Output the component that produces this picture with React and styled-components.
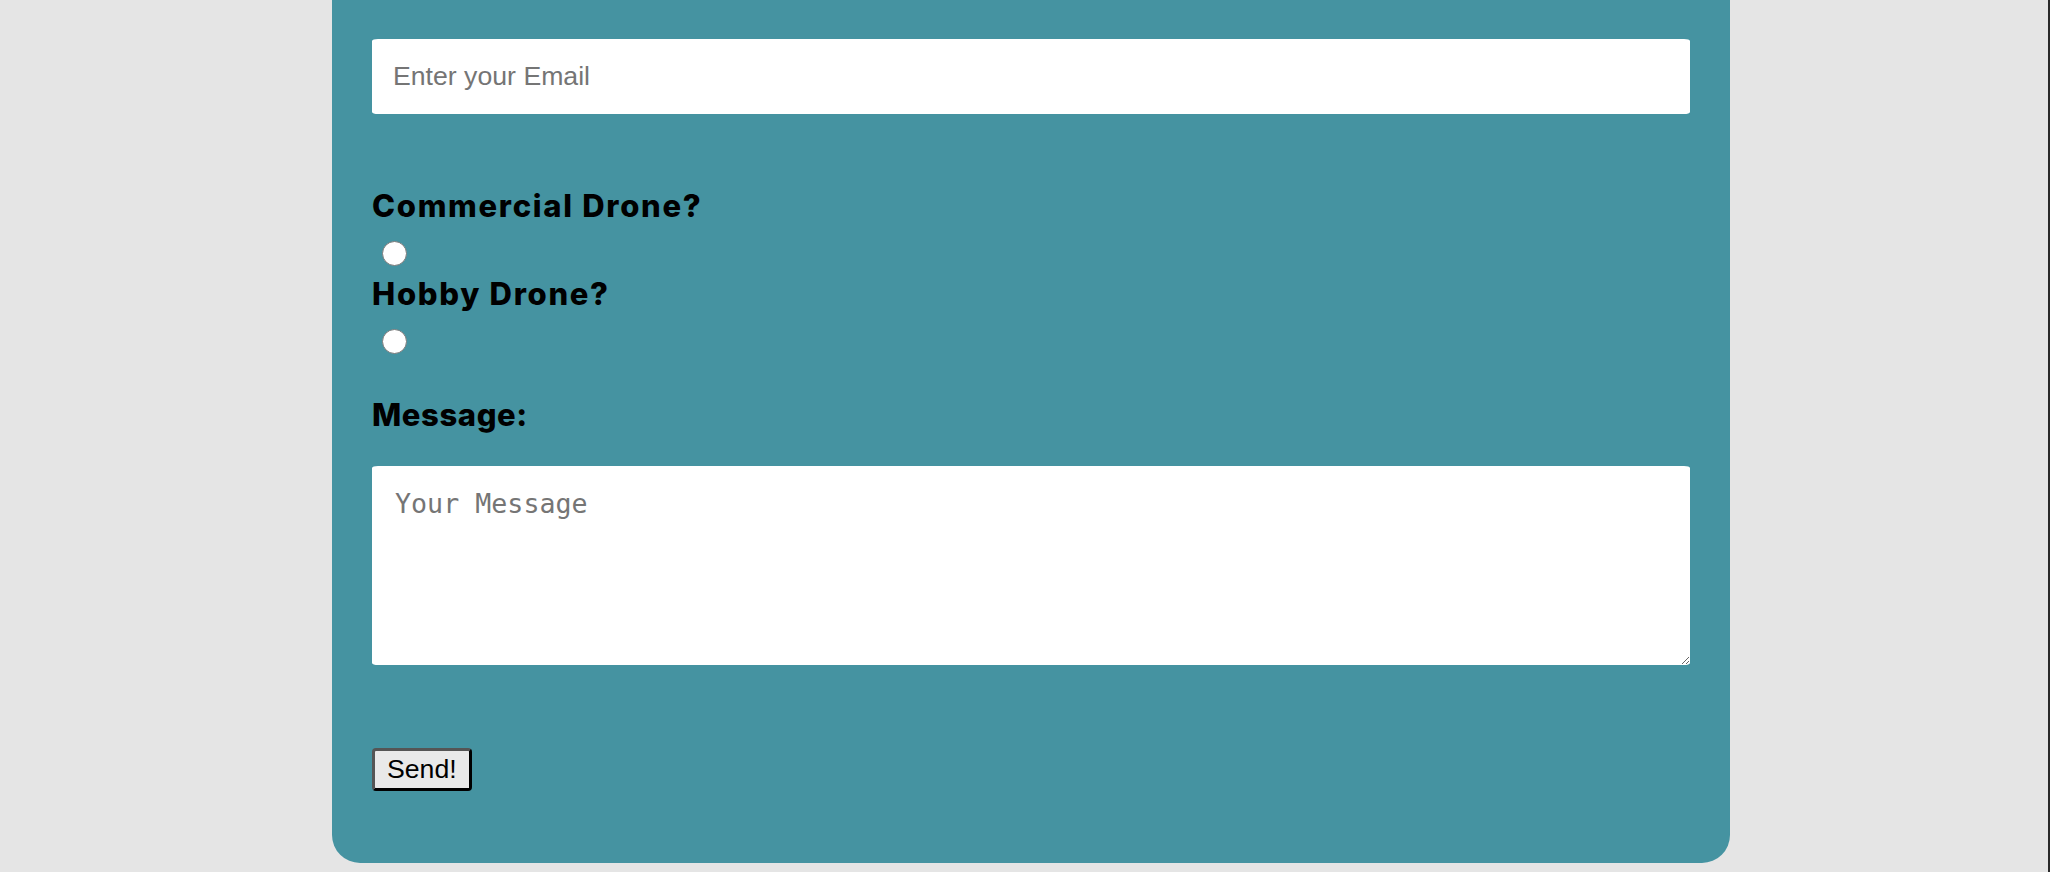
import React from "react";
import styled, { createGlobalStyle } from "styled-components";

const Global = createGlobalStyle`
  html {
    background: #e5e5e5;
    border-right: 2px solid #2a2a2a;
    min-height: 100vh;
    box-sizing: border-box;
  }
  body {
    margin: 0;
    background: #e5e5e5;
    font-family: "Liberation Sans", Arial, sans-serif;
  }
`;

const Page = styled.div`
  display: flex;
  padding: 0 0 10px 332px;
`;

const Panel = styled.section`
  width: 1398px;
  box-sizing: border-box;
  background: #4593a1;
  border-radius: 0 0 28px 28px;
  padding: 39px 40px 72px;
`;

const Form = styled.form`
  display: flex;
  flex-direction: column;
  align-items: flex-start;
`;

const TextInput = styled.input`
  box-sizing: border-box;
  width: 100%;
  height: 75px;
  border: none;
  border-radius: 6px / 2px;
  background: #fff;
  padding: 0 21px;
  font-family: "Liberation Sans", Arial, sans-serif;
  font-size: 26.67px;
  color: #000;
  outline: none;
  &::placeholder {
    color: #757575;
  }
`;

const Label = styled.label`
  display: block;
  margin-top: ${(p) => p.$gap}px;
  font-family: Inter, "Noto Sans", sans-serif;
  font-weight: 800;
  font-size: 31px;
  letter-spacing: ${(p) => p.$tracking ?? 1.7}px;
  line-height: 36px;
  color: #000;
`;

const Radio = styled.input.attrs({ type: "radio" })`
  appearance: none;
  -webkit-appearance: none;
  box-sizing: border-box;
  width: 25px;
  height: 25px;
  margin: ${(p) => p.$gap}px 0 0 10px;
  border: 1.5px solid #7a7a7a;
  border-radius: 50%;
  background: #fff;
`;

const TextArea = styled.textarea`
  box-sizing: border-box;
  width: 100%;
  height: 199px;
  margin-top: 33px;
  border: none;
  border-radius: 6px / 2px;
  background: #fff;
  padding: 22px 23px;
  font-family: "DejaVu Sans Mono", monospace;
  font-size: 26.67px;
  outline: none;
  &::placeholder {
    color: #757575;
  }
`;

const Button = styled.button`
  box-sizing: border-box;
  height: 43px;
  margin-top: 83px;
  padding: 0 12px;
  background: #e9e9e9;
  border: 3.5px solid;
  border-color: #555 #000 #000 #555;
  border-radius: 4px;
  font-family: "Liberation Sans", Arial, sans-serif;
  font-size: 26.67px;
  line-height: 1;
  color: #000;
`;

export default function App() {
  return (
    <>
      <Global />
      <Page>
        <Panel>
          <Form onSubmit={(e) => e.preventDefault()}>
            <TextInput type="email" placeholder="Enter your Email" />
            <Label $gap={74}>Commercial Drone?</Label>
            <Radio name="drone" $gap={17} />
            <Label $gap={10}>Hobby Drone?</Label>
            <Radio name="drone" $gap={17} />
            <Label $gap={43} $tracking={0.6}>Message:</Label>
            <TextArea placeholder="Your Message" />
            <Button type="submit">Send!</Button>
          </Form>
        </Panel>
      </Page>
    </>
  );
}
